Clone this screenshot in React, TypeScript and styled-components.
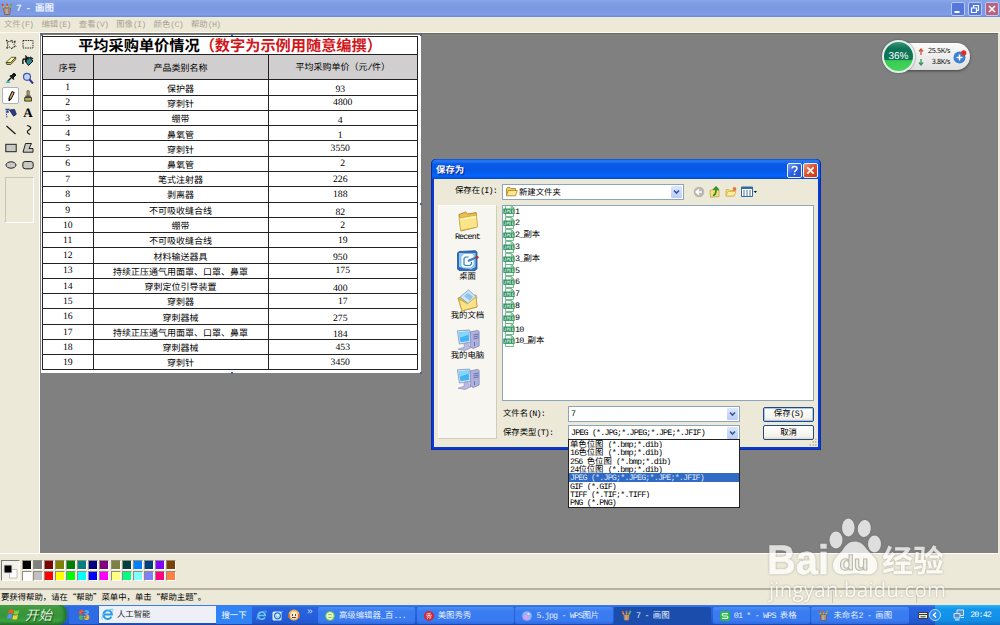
import React from "react";
import styled, { createGlobalStyle } from "styled-components";

const GlobalStyle = createGlobalStyle`
  * { box-sizing: border-box; }
  body {
    margin: 0;
    overflow: hidden;
    font-family: "Noto Sans CJK SC", sans-serif;
    font-size: 8.4px;
    line-height: 1;
    color: #000;
    text-rendering: geometricPrecision;
  }
`;

/* Half-width runs are set in a monospaced face at half an em per character. */
const Half = styled.span`
  font-family: "Liberation Mono", monospace;
  font-size: 1em;
  letter-spacing: -0.1em;
`;

function T({ children }: { children: string }) {
  return (
    <>
      {children
        .split(/([\x20-\x7e]+)/)
        .filter(Boolean)
        .map((part, i) => (/^[\x20-\x7e]+$/.test(part) ? <Half key={i}>{part}</Half> : part))}
    </>
  );
}

const Desktop = styled.div`
  position: relative;
  width: 1000px;
  height: 625px;
  display: flex;
  flex-direction: column;
  overflow: hidden;
  background: #ece9d8;
  white-space: pre;
`;

const TitleBar = styled.div`
  height: 17px;
  flex: none;
  display: flex;
  align-items: center;
  gap: 3px;
  padding: 0 1px 0 1px;
  color: #eaf1ff;
  font-size: 9.5px;
  font-weight: 700;
  background: linear-gradient(#8aa6e8 0, #7e9de6 20%, #7b98e0 60%, #7f9fe8 85%, #6d86cd 100%);
`;

const Spacer = styled.div`
  flex: 1;
`;

const CaptionButton = styled.div<{ $close?: boolean }>`
  width: 14px;
  height: 14px;
  border: 1px solid #b9c9f3;
  border-radius: 2px;
  background: ${(p) => (p.$close ? "#b9617f" : "#5377dc")};
  svg { display: block; }
`;

const MenuBar = styled.div`
  height: 16px;
  flex: none;
  display: flex;
  align-items: center;
  padding-left: 4px;
  color: #a9a594;
  border-bottom: 1px solid #fbfaf3;
`;

const MenuItem = styled.div`
  width: 37.4px;
`;

const WorkArea = styled.div`
  height: 520px;
  flex: none;
  display: flex;
`;

const ToolBox = styled.div`
  width: 40px;
  padding: 2px 0 0 2px;
  border-right: 1px solid #fff;
`;

const ToolGrid = styled.div`
  display: grid;
  grid-template-columns: 17.4px 17.4px;
  grid-auto-rows: 17.35px;
`;

const Tool = styled.div<{ $active?: boolean }>`
  display: flex;
  align-items: center;
  justify-content: center;
  border: 1px solid ${(p) => (p.$active ? "#a9b3bf" : "transparent")};
  border-radius: 2px;
  background: ${(p) => (p.$active ? "#fff" : "transparent")};
  svg { flex: none; }
`;

const ToolOptions = styled.div`
  width: 29px;
  height: 46px;
  margin: 3px 0 0 3px;
  border: 1px solid #c9c5b2;
  border-right-color: #fff;
  border-bottom-color: #fff;
`;

const CanvasArea = styled.div`
  flex: 1;
  margin-right: 2px;
  padding: 1px 0 0 1px;
  border-top: 1px solid #696a66;
  background: #808080;
`;

const Paper = styled.div`
  position: relative;
  width: 380px;
  height: 338px;
  padding: 1px;
  background: #fff;
`;

const Handle = styled.i<{ $x: number; $y: number }>`
  position: absolute;
  left: ${(p) => p.$x}px;
  top: ${(p) => p.$y}px;
  width: 2px;
  height: 2px;
  background: #42679f;
`;

const Sheet = styled.div`
  width: 376px;
  border: 1px solid #222;
  font-size: 9px;
`;

const SheetTitle = styled.div`
  height: 17.2px;
  display: flex;
  align-items: center;
  justify-content: center;
  font-size: 15.2px;
  font-weight: 700;
`;

const Red = styled.span`
  color: #d0171c;
`;

const SheetRow = styled.div<{ $head?: boolean }>`
  display: grid;
  grid-template-columns: 49.5px 175px 1fr;
  height: ${(p) => (p.$head ? "25.2px" : "15.28px")};
  background: ${(p) => (p.$head ? "#d0cece" : "#fff")};
  border-top: 1px solid #222;
`;

const Cell = styled.div<{ $drop?: boolean; $left?: boolean }>`
  display: flex;
  align-items: center;
  justify-content: center;
  padding-top: ${(p) => (p.$drop ? "5px" : "1px")};
  padding-right: ${(p) => (p.$left ? "5px" : "0")};
  & + & { border-left: 1px solid #222; }
`;

const Digits = styled.span`
  font-family: "Liberation Serif", serif;
  font-size: 9.7px;
`;

const PalettePane = styled.div`
  height: 35px;
  flex: none;
  display: flex;
  align-items: flex-start;
  gap: 2px;
  padding: 6px 0 0 1px;
  border-top: 1px solid #fff;
`;

const CurrentColor = styled.div`
  width: 19px;
  height: 21px;
  border: 1px solid #777;
  border-right-color: #fff;
  border-bottom-color: #fff;
  background: #f4f2e9;
  svg { display: block; }
`;

const Swatches = styled.div`
  display: grid;
  grid-template-columns: repeat(14, 10px);
  grid-auto-rows: 10px;
  gap: 1.2px 1.07px;
`;

const Swatch = styled.div<{ $c: string }>`
  background: ${(p) => p.$c};
  border: 1px solid #8f8d80;
  border-right-color: #fff;
  border-bottom-color: #fff;
`;

const StatusBar = styled.div`
  height: 17px;
  flex: none;
  display: flex;
  align-items: center;
  padding: 0 0 1px 1px;
  border-top: 2px solid #b5b2a3;
  font-size: 8.4px;
`;

const StatusText = styled.div`
  width: 833px;
`;

const StatusPane = styled.div`
  width: 84px;
  height: 12px;
  border-left: 1px solid #cbc8b8;
`;

const TaskBar = styled.div`
  height: 20px;
  flex: none;
  display: flex;
  align-items: stretch;
  color: #fff;
  background: linear-gradient(#3a82ee 0, #2a63de 12%, #245edb 60%, #2257cc 90%, #1a44a0 100%);
`;

const StartButton = styled.div`
  width: 67px;
  display: flex;
  align-items: center;
  gap: 4px;
  padding: 0 0 1px 7px;
  border-radius: 0 7px 9px 0;
  color: #e3f3e0;
  font-size: 13.4px;
  font-style: italic;
  text-shadow: 1px 1px 1px #174a15;
  background: linear-gradient(#5fae5c 0, #3f9a3d 15%, #37933a 55%, #3da23f 80%, #256d28 100%);
  box-shadow: inset -3px 0 3px #25752b;
`;

const PenguinSlot = styled.div`
  width: 29px;
  margin: 1px 0 1px 2px;
  display: flex;
  align-items: center;
  justify-content: center;
  background: #2f6be2;
`;

const SearchBox = styled.div`
  width: 117px;
  height: 17px;
  margin: 1px 0 0 1px;
  display: flex;
  align-items: center;
  gap: 3px;
  padding-left: 2px;
  color: #222;
  background: #edf1f7;
`;

const SearchButton = styled.div`
  width: 36px;
  height: 18px;
  margin-top: 1px;
  display: flex;
  align-items: center;
  justify-content: center;
  background: #2f83f4;
`;

const QuickLaunch = styled.div`
  width: 66px;
  display: flex;
  align-items: center;
  gap: 5px;
  padding-left: 4px;
`;

const More = styled.span`
  font: 10px "Liberation Sans", sans-serif;
  color: #cfe0ff;
  margin: -8px 0 0 2px;
`;

const Task = styled.div<{ $active?: boolean }>`
  width: 97.2px;
  height: 17px;
  margin: 2px 1.5px 0 0;
  display: flex;
  align-items: center;
  gap: 4px;
  padding-left: 7px;
  border-radius: 2px;
  color: #e6efff;
  background: ${(p) => (p.$active ? "#1b4dad" : "linear-gradient(#4d8cf6, #3a7df0 25%, #397af0 80%, #2f69dd)")};
  svg { flex: none; }
`;

const Keyboard = styled.div`
  width: 25px;
  display: flex;
  align-items: center;
  justify-content: center;
`;

const Tray = styled.div`
  flex: 1;
  display: flex;
  align-items: center;
  background: linear-gradient(#2fb4f5 0, #1495ec 20%, #1290e8 75%, #0f74c8 100%);
`;

const TrayChevron = styled.div`
  width: 12px;
  height: 12px;
  margin-left: -6px;
  border-radius: 50%;
  border: 1px solid #b9dcff;
  background: #2c8df0;
  svg { display: block; }
`;

const TrayNet = styled.div`
  margin: 0 5px 0 12px;
  height: 12px;
`;

/* ---- Floating windows ---- */

const Dialog = styled.div`
  position: absolute;
  left: 431px;
  top: 159px;
  width: 390px;
  height: 291px;
  padding: 0 3px 3px;
  border-radius: 5px 5px 0 0;
  background: #0a3ad2;
  box-shadow: inset 0 0 0 1px #0a2ca8;
`;

const DialogTitle = styled.div`
  height: 20px;
  display: flex;
  align-items: center;
  margin: 0 -2px;
  padding: 2px 2px 0 4px;
  border-radius: 5px 5px 0 0;
  color: #fff;
  font-size: 9.4px;
  font-weight: 700;
  text-shadow: 1px 1px 1px #0a1883;
  background: linear-gradient(#0a4bd0 0, #2a7cf8 9%, #0a5be6 25%, #0558e8 60%, #0666fb 85%, #0549c9 100%);
`;

const DialogButton = styled.div<{ $close?: boolean }>`
  width: 15px;
  height: 15px;
  margin-left: 1px;
  border: 1px solid #e9effc;
  border-radius: 2px;
  background: ${(p) => (p.$close ? "linear-gradient(135deg,#f09a7c,#de4e28 50%,#c93a14)" : "linear-gradient(135deg,#7ea2f0,#2c60dd 50%,#2453c8)")};
  svg { display: block; }
`;

const DialogBody = styled.div`
  height: 268px;
  display: flex;
  flex-direction: column;
  padding: 5px 3px 0 4px;
  background: #ece9d8;
`;

const LookRow = styled.div`
  height: 16px;
  display: flex;
  align-items: center;
`;

const LookLabel = styled.div`
  width: 64px;
  padding-left: 17px;
  padding-bottom: 2px;
`;

const Combo = styled.div<{ $w: number }>`
  position: relative;
  width: ${(p) => p.$w}px;
  height: 16px;
  display: flex;
  align-items: center;
  gap: 1px;
  padding-left: 2px;
  border: 1px solid #8ca5bb;
  background: #fff;
`;

const ComboArrow = styled.div`
  width: 11px;
  height: 12px;
  margin-left: auto;
  margin-right: 1px;
  border-radius: 1px;
  background: linear-gradient(#dce7fd, #b9cdf9);
  svg { display: block; }
`;

const LookTools = styled.div`
  display: flex;
  align-items: center;
  gap: 4px;
  padding-left: 9px;
`;

const DialogMain = styled.div`
  display: flex;
  gap: 5px;
  margin-top: 5px;
`;

const Places = styled.div`
  width: 59px;
  height: 234px;
  padding-top: 3px;
  border: 1px solid #fdfdf8;
  border-right-color: #d0ccba;
  border-bottom-color: #d0ccba;
  background: #f7f6f0;
`;

const Place = styled.div`
  height: 39.6px;
  display: flex;
  flex-direction: column;
  align-items: center;
  svg { flex: none; display: block; margin-bottom: -1px; }
`;

const Right = styled.div`
  display: flex;
  flex-direction: column;
  width: 312px;
`;

const FileList = styled.div`
  height: 196px;
  border: 1px solid #8ca5bb;
  background: #fff;
`;

const FileRow = styled.div`
  height: 11.8px;
  display: flex;
  align-items: center;
  padding-bottom: 1px;
  svg { flex: none; }
`;

const FieldRow = styled.div<{ $gap: number }>`
  height: 16px;
  margin-top: ${(p) => p.$gap}px;
  display: flex;
  align-items: center;
`;

const FieldLabel = styled.div`
  width: 66px;
  padding-left: 1px;
`;

const PushButton = styled.div<{ $primary?: boolean }>`
  width: 51px;
  height: 15px;
  margin-left: auto;
  display: flex;
  align-items: center;
  justify-content: center;
  border: 1px solid #1f4a82;
  border-radius: 2px;
  background: linear-gradient(#fff, #f3f2eb 80%, #dedacb);
  box-shadow: ${(p) => (p.$primary ? "inset 0 0 0 1px #a9c4f0" : "none")};
`;

const DropList = styled.div`
  position: absolute;
  left: -1px;
  top: 13.5px;
  width: 172px;
  height: 69px;
  border: 1px solid #222;
  background: #fff;
`;

const DropItem = styled.div<{ $active?: boolean }>`
  height: 8.35px;
  line-height: 8.35px;
  overflow: hidden;
  padding-left: 1px;
  color: ${(p) => (p.$active ? "#dfe8f8" : "#000")};
  background: ${(p) => (p.$active ? "#316ac5" : "transparent")};
`;

const Grip = styled.div`
  position: absolute;
  right: 4px;
  bottom: 4px;
  height: 7px;
  svg { display: block; }
`;

const SpeedWidget = styled.div`
  position: absolute;
  left: 885px;
  top: 43px;
  width: 85px;
  height: 27px;
  display: flex;
  align-items: center;
  border-radius: 14px;
  background: linear-gradient(#fbfbfb, #e0e0e0);
  box-shadow: 0 1px 3px rgba(0, 0, 0, 0.5);
`;

const Ball = styled.div`
  width: 33px;
  height: 33px;
  margin-left: -3px;
  flex: none;
  display: flex;
  align-items: center;
  justify-content: center;
  border: 2px solid #e4eeea;
  border-radius: 50%;
  color: #fff;
  font: 10px "Liberation Sans", sans-serif;
  background: linear-gradient(#3a9679 0, #0e7358 22%, #0d7555 62%, #35cc52 64%, #48d35c 100%);
  box-shadow: 0 0 2px #31594d;
`;

const Speeds = styled.div`
  width: 35px;
  display: flex;
  flex-direction: column;
  gap: 2px;
  padding-left: 3px;
  font: 7.2px/9px "Open Sans", sans-serif;
  letter-spacing: -0.4px;
`;

const Speed = styled.div`
  display: flex;
  align-items: center;
  justify-content: space-between;
`;

const Plus = styled.div`
  margin-left: 1px;
  height: 14px;
`;

const Watermark = styled.svg`
  position: absolute;
  left: 760px;
  top: 510px;
  pointer-events: none;
  filter: drop-shadow(0 0 1px rgba(90, 90, 80, 0.6));
`;

/* ---- Icons ---- */

const PaintIcon = ({ s = 12 }: { s?: number }) => (
  <svg width={s} height={s} viewBox="0 0 12 12">
    <path d="M3.5 6 1.5 1.5M6 6V.8M8 6l2.5-5" stroke="#d8b35a" strokeWidth="1.6" />
    <path d="m1.2 1 1 2M6 .8v2" stroke="#d34530" strokeWidth="1.7" />
    <path d="m10.5 1-1.2 2.5" stroke="#48ad5c" strokeWidth="1.7" />
    <path d="M2.6 5h6.8l-.8 6.5H3.5z" fill="#a9ad9d" stroke="#604f3f" strokeWidth=".7" />
    <path d="M4 6v4.5M7.5 6v4.5" stroke="#e3664e" />
  </svg>
);

const IEIcon = ({ s = 13, c = "#279be4" }: { s?: number; c?: string }) => (
  <svg width={s} height={s} viewBox="0 0 14 14">
    <path d="M11.3 9.3A4.6 4.6 0 1 1 11.8 7H3.5" fill="none" stroke={c} strokeWidth="2.1" />
    <path d="M1.4 12.2C-.5 10 5 2 12.2 1.1c1.3.1.6 2 .1 2.7" fill="none" stroke="#67c6ef" strokeWidth="1" />
  </svg>
);

const Folder = ({ s = 12 }: { s?: number }) => (
  <svg width={s} height={s} viewBox="0 0 24 24">
    <path d="M3 5.5 9.5 3l2.2 2 8.5-1.4L21 18 5 22z" fill="#e9c14f" stroke="#b58a2d" />
    <path d="m3 9 17.5-3L21.5 18 4.7 21.5z" fill="#fbe58b" stroke="#cfa843" strokeWidth=".8" />
    <path d="m4.5 10.5 15-2.6" stroke="#fff9cf" />
  </svg>
);

const SmallFolder = () => (
  <svg width="13" height="12" viewBox="0 0 13 12">
    <path d="M1.5 9.500V2.500l1-1h2.500l1 1h4.500v2" fill="#f4cd58" stroke="#b08a30" strokeWidth=".9" />
    <path d="M1.500 9.800 3.300 4.500h8.900l-1.600 5.300z" fill="#fbe796" stroke="#b08a30" strokeWidth=".9" />
  </svg>
);

const JpegIcon = () => (
  <svg width="12" height="12" viewBox="0 0 12 12">
    <path d="M2.5.5h6l2 2v9h-8z" fill="#f3faf5" stroke="#55a777" strokeWidth=".8" />
    <path d="M8.2.6v2.2h2.3" fill="none" stroke="#55a777" strokeWidth=".8" />
    <rect x=".3" y="3.5" width="11.4" height="5.4" fill="#329461" />
    <path d="M2.4 4.8v2.8H1.3M4.2 7.8V5h1.3v1.3H4.3M8 5H6.7v2.6H8M6.8 6.3h1M10.7 5H9.4v2.6h1.2v-1" stroke="#dff3e6" strokeWidth=".65" fill="none" />
  </svg>
);

const Computer = () => (
  <svg width="24" height="24" viewBox="0 0 24 24">
    <path d="m14 4 7.5-1.6 1.6 1V18l-6 2.500-3-2z" fill="#aeb0dd" stroke="#8083b9" strokeWidth=".8" />
    <path d="m17.5 7 5-1m-5 3 5-1m-5 3 5-1.2M18.5 14v4" stroke="#686aa9" strokeWidth=".9" />
    <path d="m1.4 2.8 12.3-.7 1 12.2L3.4 16z" fill="#dfe8f8" stroke="#7991c4" strokeWidth=".8" />
    <path d="m2.7 4.2 9.8-.8.8 9.5-8.9 1.4z" fill="#45b4f3" />
    <path d="m3 4.5 9-.7.3 3-8.7 3z" fill="#83d8fc" />
    <path d="m8 15.5 4-.8.5 3.5 3 1.3-6.5 3-7-1.3 6.3-2z" fill="#b9bce0" stroke="#9094bd" strokeWidth=".7" />
  </svg>
);

const DesktopIcon = () => (
  <svg width="24" height="24" viewBox="0 0 24 24">
    <path d="m1.500 4 1.500-1.500 16.500-.8 1.500 1.500v16.500l-2 2L3 21.500 1.500 20z" fill="#2c6cb8" stroke="#24549a" strokeWidth=".8" />
    <path d="M3 4h16.500v14L15 20.500 3 18z" fill="#8fc9ee" />
    <path d="m5 7 3-2.500h9l1 2V16l-3 3H7l-2-2z" fill="#f4fafd" stroke="#7db3da" strokeWidth=".8" />
    <path d="M12.500 8H9.500L8 9.500v6l1.500 1h4.500l1.500-1.500v-2" fill="none" stroke="#3a80bb" strokeWidth="1.200" />
    <path d="m12 12 8-3.500" stroke="#3f7fb9" strokeWidth="2" />
    <circle cx="21" cy="8.300" r="1.600" fill="#b73039" />
  </svg>
);

const DocsIcon = () => (
  <svg width="24" height="24" viewBox="0 0 24 24">
    <path d="m2 10 6-2 2 2 10-3 1 12-15 4z" fill="#e3b747" stroke="#b98d2f" strokeWidth=".8" />
    <path d="m4 9 8.5-7L21 9.5l-5.3 9z" fill="#cfe6f5" stroke="#87afd0" />
    <path d="m8 8 4-3.2 5 4-3 4z" fill="#8fc3e7" />
    <path d="m2.500 11 9 4.800 8.500-7 1 10-15 4z" fill="#fae28a" stroke="#c9a03c" strokeWidth=".8" />
  </svg>
);

const NetIcon = () => (
  <svg width="12" height="12" viewBox="0 0 12 12">
    <path d="M4 1h6.500v5.500H4z" fill="#4c8fd0" stroke="#d4e5f3" />
    <path d="M1 4.500h6V9H1z" fill="#4c8fd0" stroke="#d4e5f3" />
    <path d="M2 10.800h4.500M8 8.500h3" stroke="#d4e5f3" strokeWidth="1.200" />
  </svg>
);

const toolShapes: React.ReactNode[] = [
  <path key="0" d="m1.500 2 2.500 2 3-2v2.500L10.500 3 9 6.500l2 2-3 .5-1 2-2.500-2-3 1.500L3 7z" fill="none" stroke="#111" strokeWidth="1" strokeDasharray="1.500 .8" />,
  <rect key="1" x="1" y="2.500" width="10" height="7.500" fill="none" stroke="#222" strokeDasharray="1.400 1" />,
  <g key="2"><path d="M1 7.500 6.500 2.300h4.200l-5 5.400z" fill="#fff8a0" stroke="#333" strokeWidth=".8" /><path d="M1 7.500h4.700l5-5.200v2.200l-5 5H1.800z" fill="#d3c450" stroke="#333" strokeWidth=".8" /></g>,
  <g key="3"><path d="m3 6 3.600-4L11 6 6.500 10.500z" fill="#278a92" stroke="#111" /><path d="M4 7V1.500l2.500 3M3.500 4.500C1 3 .5 5 1 9M8 2l3 2" fill="none" stroke="#111" strokeWidth="1.400" /></g>,
  <g key="4"><path d="m6 4 3-3 2 2-3 3" fill="#123" stroke="#111" /><path d="m5 3.500 4 4M7 5l-4.500 4.500" stroke="#111" strokeWidth="1.400" /><path d="M.5 11h5L3 8z" fill="#33b8bd" /></g>,
  <g key="5"><circle cx="5" cy="4.800" r="3.500" fill="#b9d6ff" stroke="#4f55a6" strokeWidth="1.200" /><path d="m7.500 7.500 3.500 4" stroke="#34349a" strokeWidth="2" /></g>,
  <g key="6"><path d="M4 8 7 1.500l2.300 1-3.200 6.600L4 11z" fill="#d4a267" stroke="#111" /><path d="m4 8 2 1-2 2z" fill="#111" /></g>,
  <g key="7"><path d="M5 .8h2.200v4.500H5z" fill="#c9b956" stroke="#333" strokeWidth=".7" /><path d="M3.300 5.500h5.600v1.800H3.300z" fill="#555" /><path d="M2.700 7.500h6.800v3.600H2.700z" fill="#b7ad52" stroke="#222" strokeWidth=".8" /></g>,
  <g key="8"><path d="m4.500 3 5-.6 1.800 4.800-2.700 2z" fill="#273b9b" stroke="#111" strokeWidth=".7" /><path d="M.5 2.500h4M.8 5h3M1 7.500h1M1.300 9.800h1M2.500 3.500v2" stroke="#2d42a3" strokeWidth="1.400" /></g>,
  <text key="9" x="6" y="10.300" textAnchor="middle" fontFamily="Liberation Serif" fontWeight="700" fontSize="13">A</text>,
  <path key="10" d="m1.500 2 9 8" stroke="#111" strokeWidth="1.200" />,
  <path key="11" d="M5 1.500c5 1 4 3 2.500 4-3 1.800-3 3 .5 5" fill="none" stroke="#111" strokeWidth="1.200" />,
  <rect key="12" x=".8" y="2.300" width="10.400" height="7.400" fill="#c9c9c4" stroke="#222" />,
  <path key="13" d="M3.500 1.500h6L7 6.500h4v3.700H1z" fill="#c9c9c4" stroke="#222" />,
  <ellipse key="14" cx="6" cy="6" rx="5" ry="3.200" fill="#c9c9c4" stroke="#222" />,
  <rect key="15" x=".8" y="2.500" width="10.400" height="7.300" rx="2.400" fill="#c9c9c4" stroke="#222" />,
];

/* ---- Data ---- */

const menus = ["文件(F)", "编辑(E)", "查看(V)", "图像(I)", "颜色(C)", "帮助(H)"];

type Row = { name: string; price: string; drop?: boolean; left?: boolean };
const rows: Row[] = [
  { name: "保护器", price: "93", drop: true, left: true },
  { name: "穿刺针", price: "4800" },
  { name: "绷带", price: "4", drop: true, left: true },
  { name: "鼻氧管", price: "1", drop: true, left: true },
  { name: "穿刺针", price: "3550", left: true },
  { name: "鼻氧管", price: "2" },
  { name: "笔式注射器", price: "226", left: true },
  { name: "剥离器", price: "188", left: true },
  { name: "不可吸收缝合线", price: "82", drop: true, left: true },
  { name: "绷带", price: "2" },
  { name: "不可吸收缝合线", price: "19" },
  { name: "材料输送器具", price: "950", drop: true, left: true },
  { name: "持续正压通气用面罩、口罩、鼻罩", price: "175" },
  { name: "穿刺定位引导装置", price: "400", drop: true, left: true },
  { name: "穿刺器", price: "17" },
  { name: "穿刺器械", price: "275", drop: true, left: true },
  { name: "持续正压通气用面罩、口罩、鼻罩", price: "184", drop: true, left: true },
  { name: "穿刺器械", price: "453" },
  { name: "穿刺针", price: "3450", left: true },
];

const palette = [
  "#000", "#808080", "#800000", "#808000", "#008000", "#008080", "#000080", "#800080", "#808040", "#004040", "#0080ff", "#004080", "#8000ff", "#804000",
  "#fff", "#c0c0c0", "#f00", "#ff0", "#0f0", "#0ff", "#00f", "#f0f", "#ffff80", "#00ff80", "#80ffff", "#8080ff", "#ff0080", "#ff8040",
];

const files = ["1", "2", "2_副本", "3", "3_副本", "5", "6", "7", "8", "9", "10", "10_副本"];

const places: [string, React.ReactNode][] = [
  ["Recent", <Folder s={24} />],
  ["桌面", <DesktopIcon />],
  ["我的文档", <DocsIcon />],
  ["我的电脑", <Computer />],
  ["", <Computer />],
];

const formats = [
  "单色位图 (*.bmp;*.dib)",
  "16色位图 (*.bmp;*.dib)",
  "256 色位图 (*.bmp;*.dib)",
  "24位位图 (*.bmp;*.dib)",
  "JPEG (*.JPG;*.JPEG;*.JPE;*.JFIF)",
  "GIF (*.GIF)",
  "TIFF (*.TIF;*.TIFF)",
  "PNG (*.PNG)",
];

const Arrow = () => (
  <ComboArrow>
    <svg width="11" height="12" viewBox="0 0 11 12">
      <path d="m3 4.500 2.500 2.600L8 4.500" fill="none" stroke="#3c5488" strokeWidth="1.600" />
    </svg>
  </ComboArrow>
);

const tasks: { label: string; icon: React.ReactNode; active?: boolean }[] = [
  {
    label: "高级编辑器_百...",
    icon: (
      <svg width="10" height="10" viewBox="0 0 10 10">
        <circle cx="5" cy="5" r="4.800" fill="#7bcf3c" />
        <path d="M7.600 6.500A3 3 0 1 1 8 5H3" fill="none" stroke="#fff" strokeWidth="1.300" />
      </svg>
    ),
  },
  {
    label: "美图秀秀",
    icon: (
      <svg width="10" height="10" viewBox="0 0 10 10">
        <circle cx="5" cy="5" r="5" fill="#cf2733" />
        <path d="M2.500 2.800 7 2M5 2v3M2 4.200h6M5 4.200 2.500 6M5 4.200 7.500 6M3.500 6h3L5.800 8.300M4.200 6 3 8.300" stroke="#fbe4e4" strokeWidth=".7" fill="none" />
      </svg>
    ),
  },
  {
    label: "5.jpg - WPS图片",
    icon: (
      <svg width="10" height="10" viewBox="0 0 10 10">
        <circle cx="5" cy="5" r="4.800" fill="#8fb4fb" />
        <path d="M.8 6 4 3.500l3 3L8.700 5A4.800 4.800 0 0 1 1 7.500z" fill="#d99cf2" />
        <circle cx="6.500" cy="3" r="1.100" fill="#e5f5ff" />
      </svg>
    ),
  },
  { label: "7 - 画图", icon: <PaintIcon s={11} />, active: true },
  {
    label: "01 * - WPS 表格",
    icon: (
      <svg width="10" height="10" viewBox="0 0 10 10">
        <rect width="10" height="10" rx="2" fill="#2db550" />
        <path d="M8 2.700H3.300a1.100 1.100 0 0 0 0 2.300h3.400a1.100 1.100 0 0 1 0 2.400H2" fill="none" stroke="#e9fff0" strokeWidth="1.200" />
      </svg>
    ),
  },
  { label: "未命名2 - 画图", icon: <PaintIcon s={11} /> },
];

export default function App() {
  return (
    <>
      <GlobalStyle />
      <Desktop lang="zh-CN">
        <TitleBar>
          <PaintIcon s={12} />
          <span><T>7 - 画图</T></span>
          <Spacer />
          <CaptionButton><svg width="12" height="12"><path d="M2.500 9h5" stroke="#fff" strokeWidth="2" /></svg></CaptionButton>
          <CaptionButton><svg width="12" height="12"><path d="M4.500 4.500v-2h5v5h-2M2.500 5h5v4.500h-5z" fill="none" stroke="#fff" strokeWidth="1.200" /></svg></CaptionButton>
          <CaptionButton $close><svg width="12" height="12"><path d="m3 3 6 6m0-6-6 6" stroke="#fff" strokeWidth="1.600" /></svg></CaptionButton>
        </TitleBar>
        <MenuBar>
          {menus.map((m) => <MenuItem key={m}><T>{m}</T></MenuItem>)}
        </MenuBar>

        <WorkArea>
          <ToolBox>
            <ToolGrid>
              {toolShapes.map((shape, i) => (
                <Tool key={i} $active={i === 6}>
                  <svg width="12" height="12" viewBox="0 0 12 12">{shape}</svg>
                </Tool>
              ))}
            </ToolGrid>
            <ToolOptions />
          </ToolBox>
          <CanvasArea>
            <Paper>
              <Sheet>
                <SheetTitle>平均采购单价情况<Red>{"\uff08数字为示例用随意编撰\uff09"}</Red></SheetTitle>
                <SheetRow $head>
                  <Cell>序号</Cell>
                  <Cell>产品类别名称</Cell>
                  <Cell><span>{"平均采购单价\uff08元"}<T>/</T>{"件\uff09"}</span></Cell>
                </SheetRow>
                {rows.map((r, i) => (
                  <SheetRow key={i}>
                    <Cell><Digits>{i + 1}</Digits></Cell>
                    <Cell>{r.name}</Cell>
                    <Cell $drop={r.drop} $left={r.left}><Digits>{r.price}</Digits></Cell>
                  </SheetRow>
                ))}
              </Sheet>
              <Handle $x={0} $y={-1} />
              <Handle $x={190} $y={-1} />
              <Handle $x={379} $y={-1} />
              <Handle $x={379} $y={168} />
              <Handle $x={379} $y={337} />
              <Handle $x={190} $y={337} />
            </Paper>
          </CanvasArea>
        </WorkArea>

        <PalettePane>
          <CurrentColor>
            <svg width="17" height="19">
              <path d="M7.500 8.500H15V17H7.500z" fill="#fff" stroke="#c7c3b3" />
              <path d="M2 4h8v8H2z" fill="#000" stroke="#ddd" />
            </svg>
          </CurrentColor>
          <Swatches>
            {palette.map((c) => <Swatch key={c} $c={c} />)}
          </Swatches>
        </PalettePane>
        <StatusBar>
          <StatusText>{"要获得帮助\uff0c请在“帮助”菜单中\uff0c单击“帮助主题”。"}</StatusText>
          <StatusPane />
          <StatusPane />
        </StatusBar>

        <TaskBar>
          <StartButton>
            <svg width="14" height="13" viewBox="0 0 14 13">
              <path d="M2 2c2-1.200 3-.7 4.600 0l-.9 4C4 5.200 3 5 1 6z" fill="#ee5b2c" />
              <path d="M7.400 2.200c1.800.8 3 .7 4.800-.2l-1 4c-1.700.9-3 .9-4.700.1z" fill="#83ce47" />
              <path d="M.8 6.800c2-1 3-.8 4.600-.1l-.9 4C3 10 1.800 10-.1 11z" fill="#5296f0" />
              <path d="M6.300 6.900c1.700.8 3 .8 4.700-.1l-1 4.100c-1.700.9-3 .9-4.700.1z" fill="#fbcf3b" />
            </svg>
            开始
          </StartButton>
          <PenguinSlot>
            <svg width="12" height="12" viewBox="0 0 12 12">
              <circle cx="3.500" cy="3.300" r="2.600" fill="#e65a3a" />
              <circle cx="8.600" cy="3.300" r="2.400" fill="#57a9ee" />
              <circle cx="3.300" cy="8.600" r="2.400" fill="#5cba45" />
              <circle cx="8.500" cy="8.300" r="2.800" fill="#efb439" />
              <path d="M8.500 3.500H4v2.700h4v2.600H3.500" fill="none" stroke="#2b6ace" strokeWidth=".9" />
            </svg>
          </PenguinSlot>
          <SearchBox><IEIcon s={13} />人工智能</SearchBox>
          <SearchButton>搜一下</SearchButton>
          <QuickLaunch>
            <IEIcon s={11} c="#6cc4f5" />
            <svg width="11" height="11" viewBox="0 0 11 11">
              <rect x=".5" y="1.500" width="9" height="9" rx="1.500" fill="#d9efff" />
              <circle cx="5.500" cy="5.800" r="3" fill="none" stroke="#2976cd" strokeWidth="1.300" />
              <path d="m4 6 2 1.500L10.500 1" fill="none" stroke="#84c7f1" />
            </svg>
            <svg width="12" height="12" viewBox="0 0 12 12">
              <circle cx="6" cy="6" r="5.500" fill="#f1b255" />
              <circle cx="6" cy="6.300" r="3.700" fill="#fbead0" />
              <path d="M4.500 5v2M7.500 5v2M4 8.500h4" stroke="#6d4526" />
              <path d="M1 5v4M11 5v4" stroke="#d36a37" strokeWidth="1.600" />
            </svg>
            <More>»</More>
          </QuickLaunch>
          {tasks.map((t) => (
            <Task key={t.label} $active={t.active}>{t.icon}<span><T>{t.label}</T></span></Task>
          ))}
          <Keyboard>
            <svg width="10" height="8" viewBox="0 0 10 8">
              <rect x=".5" y="1.500" width="9" height="6" fill="#f3ecd5" stroke="#3a3d43" />
              <path d="M1 3.500h8M2.500 5.800h5" stroke="#3a3d43" />
            </svg>
          </Keyboard>
          <Tray>
            <TrayChevron><svg width="10" height="10"><path d="M6 2.500 3.500 5 6 7.500" fill="none" stroke="#fff" strokeWidth="1.500" /></svg></TrayChevron>
            <TrayNet><NetIcon /></TrayNet>
            <span><T>20:42</T></span>
          </Tray>
        </TaskBar>

        <Dialog>
          <DialogTitle>
            保存为
            <Spacer />
            <DialogButton><svg width="13" height="13"><path d="M4 4.300C4.300 2 9 2 9 4.600 9 6.300 6.500 6.300 6.500 8.300M6.500 9.500v1.500" fill="none" stroke="#fff" strokeWidth="1.500" /></svg></DialogButton>
            <DialogButton $close><svg width="13" height="13"><path d="m3.300 3.300 6.400 6.400m0-6.400-6.400 6.400" stroke="#fff" strokeWidth="1.700" /></svg></DialogButton>
          </DialogTitle>
          <DialogBody>
            <LookRow>
              <LookLabel><T>保存在(I):</T></LookLabel>
              <Combo $w={182}><SmallFolder />新建文件夹<Arrow /></Combo>
              <LookTools>
                <svg width="12" height="12" viewBox="0 0 12 12">
                  <circle cx="6" cy="6" r="5.300" fill="#b9b9b1" />
                  <path d="M9 6H3.500M6 3.200 3.200 6 6 8.800" fill="none" stroke="#fff" strokeWidth="1.500" />
                </svg>
                <svg width="12" height="12" viewBox="0 0 12 12">
                  <path d="M1 4.500 4 3.500l6 .5v6.500l-8.500.8z" fill="#f6dc7d" stroke="#c39c3c" strokeWidth=".7" />
                  <path d="M4 9.500c3-.6 3.200-3 3-6.500M4.300 4 7 1.200 9.700 4" fill="none" stroke="#258c22" strokeWidth="1.700" />
                </svg>
                <svg width="12" height="12" viewBox="0 0 12 12">
                  <path d="M1 10V3.500h3l1 1h4V10z" fill="#f6d970" stroke="#cfa947" strokeWidth=".7" />
                  <path d="m1 10 2-4.500h8L9 10z" fill="#fcec9d" stroke="#cfa947" strokeWidth=".7" />
                  <circle cx="9.500" cy="3" r="1.900" fill="#e8773c" />
                </svg>
                <svg width="16" height="12" viewBox="0 0 16 12">
                  <path d="M.5 1h11v9.500H.5z" fill="#fff" stroke="#2d6ba9" />
                  <path d="M.5 2h11" stroke="#2d6ba9" strokeWidth="2" />
                  <path d="M2 5h2M5 5h2M8 5h2M2 7h2M5 7h2M8 7h2M2 9h2M5 9h2M8 9h2" stroke="#447699" />
                  <path d="M12.700 5h3.300l-1.650 2z" fill="#111" />
                </svg>
              </LookTools>
            </LookRow>
            <DialogMain>
              <Places>
                {places.map(([label, icon], i) => <Place key={i}>{icon}<span><T>{label}</T></span></Place>)}
              </Places>
              <Right>
                <FileList>
                  {files.map((f) => <FileRow key={f}><JpegIcon /><span><T>{f}</T></span></FileRow>)}
                </FileList>
                <FieldRow $gap={5}>
                  <FieldLabel><T>文件名(N):</T></FieldLabel>
                  <Combo $w={172}><span><T>7</T></span><Arrow /></Combo>
                  <PushButton $primary><span><T>保存(S)</T></span></PushButton>
                </FieldRow>
                <FieldRow $gap={2.5}>
                  <FieldLabel><T>保存类型(T):</T></FieldLabel>
                  <Combo $w={172}>
                    <span><T>JPEG (*.JPG;*.JPEG;*.JPE;*.JFIF)</T></span>
                    <Arrow />
                    <DropList>
                      {formats.map((f, i) => <DropItem key={f} $active={i === 4}><T>{f}</T></DropItem>)}
                    </DropList>
                  </Combo>
                  <PushButton>取消</PushButton>
                </FieldRow>
              </Right>
            </DialogMain>
          </DialogBody>
          <Grip>
            <svg width="8" height="7"><path d="M6 0h1.500M3.500 3H5M6 3h1.500M.5 6H2M3.500 6H5M6 6h1.500" stroke="#b3af9c" strokeWidth="1.500" /></svg>
          </Grip>
        </Dialog>

        <SpeedWidget>
          <Ball>36%</Ball>
          <Speeds>
            <Speed><svg width="6" height="7"><path d="M3 7V2M1 3.500 3 1l2 2.500" fill="none" stroke="#d2543d" strokeWidth="1.300" /></svg>25.5K/s</Speed>
            <Speed><svg width="6" height="7"><path d="M3 0v5M1 3.500 3 6l2-2.500" fill="none" stroke="#37985a" strokeWidth="1.300" /></svg>3.8K/s</Speed>
          </Speeds>
          <Plus>
            <svg width="16" height="14" viewBox="0 0 16 14">
              <circle cx="8.500" cy="7.500" r="6" fill="#3d82d2" />
              <path d="M5.500 7.500h6M8.500 4.500v6" stroke="#fff" strokeWidth="1.500" />
              <circle cx="12.700" cy="3" r="2.700" fill="#de2f28" />
            </svg>
          </Plus>
        </SpeedWidget>

        <Watermark width="200" height="100" fill="#fff" opacity=".74">
          <text x="7" y="63.500" textLength="62" lengthAdjust="spacingAndGlyphs" fontFamily="Liberation Sans" fontWeight="700" fontSize="41.500" stroke="#fff" strokeWidth=".5">Bai</text>
          <ellipse cx="76" cy="30" rx="6.500" ry="8.500" />
          <ellipse cx="88.300" cy="17.500" rx="6.300" ry="9" />
          <ellipse cx="104.300" cy="18.500" rx="6.500" ry="8.500" transform="rotate(8 104.300 18.500)" />
          <ellipse cx="114.500" cy="34" rx="6.500" ry="8.500" />
          <path d="M95 31.500c6 0 9 4 12 8s10 8 10.300 15c.3 7-4.300 10.200-10 10-5 0-7-1-12.300-1s-8 1.200-12.500 1c-6 0-9.800-4-9.500-9.500.2-7 7-11 10-15.500s6-8 12-8z" />
          <text x="79.500" y="60" textLength="29" lengthAdjust="spacingAndGlyphs" fontFamily="Liberation Sans" fontWeight="700" fontSize="21" fill="#f4f3ec" stroke="#aaa99c" strokeWidth="1">du</text>
          <text x="122" y="61.500" textLength="62" fontFamily="Noto Sans CJK SC" fontWeight="700" fontSize="31">经验</text>
          <text x="9" y="87" textLength="177" fontFamily="Open Sans" fontSize="20.500">jingyan.baidu.com</text>
        </Watermark>
      </Desktop>
    </>
  );
}
